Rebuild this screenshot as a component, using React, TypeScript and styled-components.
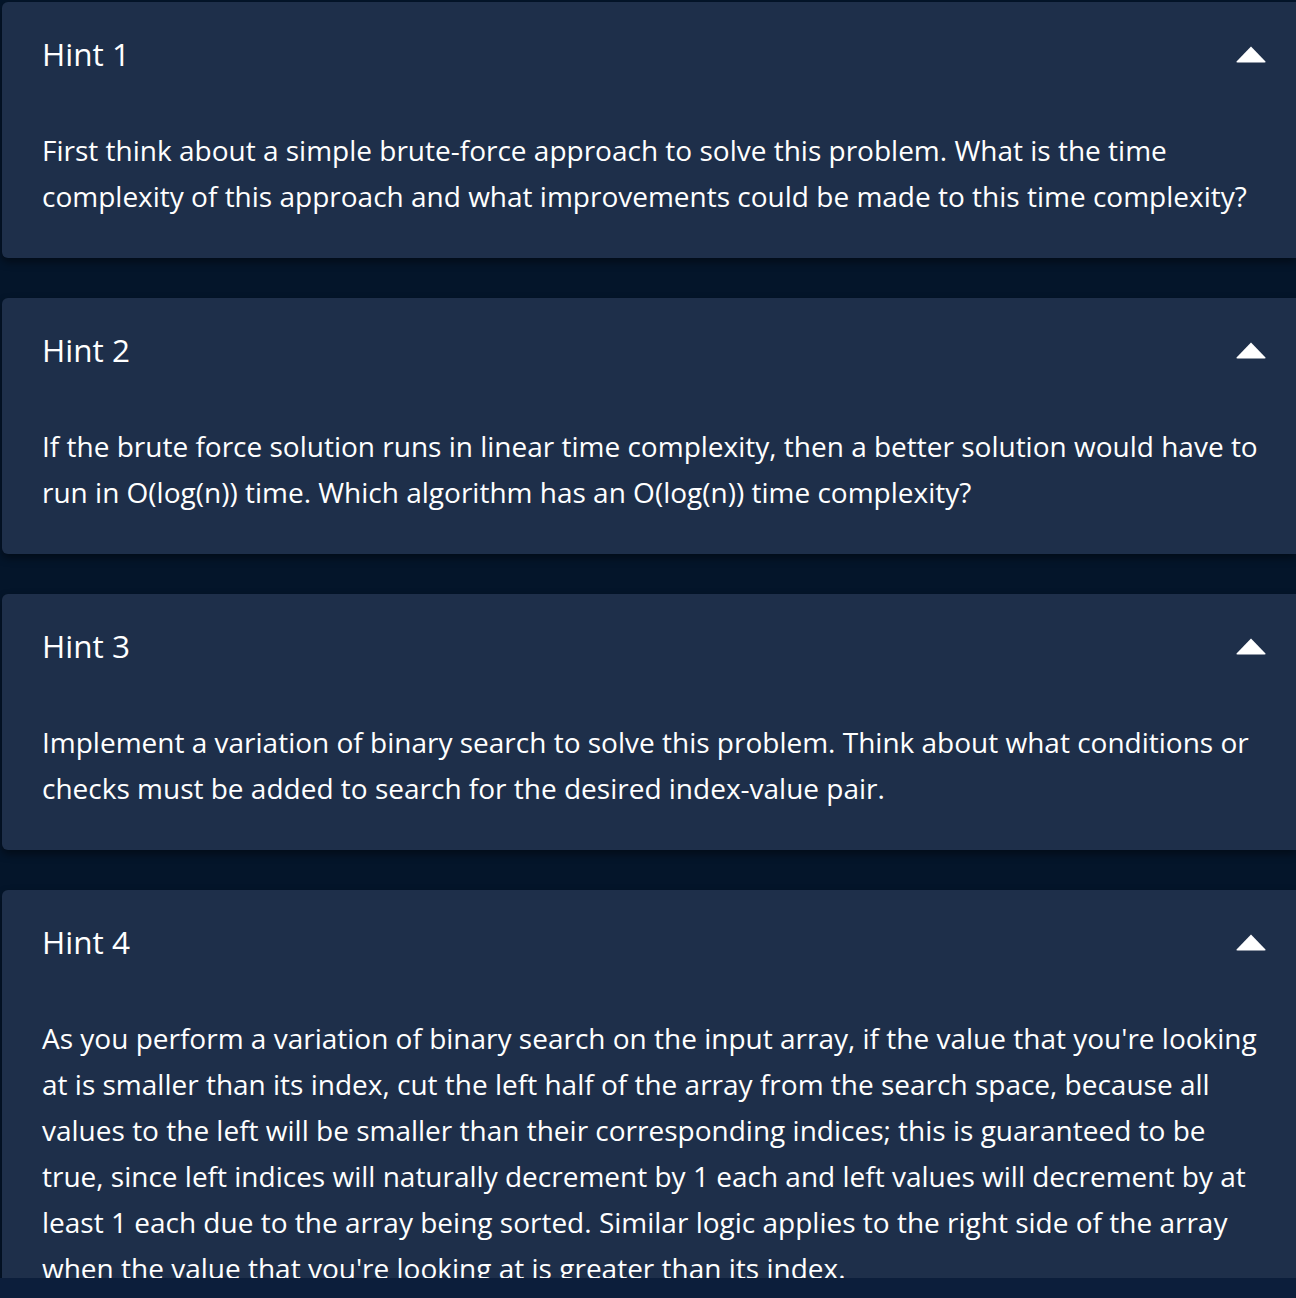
import React from 'react';
import styled, { createGlobalStyle } from 'styled-components';

const GlobalStyle = createGlobalStyle`
  html, body {
    margin: 0;
    padding: 0;
    background: #04152a;
    overflow: hidden;
  }
  body {
    font-family: 'Open Sans', 'Liberation Sans', sans-serif;
  }
`;

const Page = styled.div`
  width: 1296px;
  height: 1298px;
  display: flex;
  flex-direction: column;
  background: #04152a;
`;

const Scroller = styled.div`
  height: 1278px;
  flex-shrink: 0;
  overflow: hidden;
  padding: 2px 0 0 2px;
  box-sizing: border-box;
  display: flex;
  flex-direction: column;
  gap: 40px;
`;

const BottomBar = styled.div`
  flex: 1;
  background: #0c1e3b;
`;

const Card = styled.section`
  flex-shrink: 0;
  background: #1e2f4a;
  border-radius: 6px 0 0 6px;
  padding: 30px 30px 39px 40px;
  box-shadow: 0 4px 8px rgba(0, 0, 0, 0.45);
  color: #ffffff;
`;

const Header = styled.div`
  height: 44px;
  display: flex;
  align-items: center;
  justify-content: space-between;
`;

const Title = styled.h3`
  margin: 0;
  font-size: 31.5px;
  font-weight: 400;
  line-height: 44px;
`;

const Arrow = styled.svg`
  width: 30px;
  height: 18px;
  flex-shrink: 0;
`;

const Body = styled.p`
  margin: 51px 0 0;
  font-size: 28px;
  line-height: 46px;
  font-weight: 400;
`;

const hints = [
  'First think about a simple brute-force approach to solve this problem. What is the time complexity of this approach and what improvements could be made to this time complexity?',
  'If the brute force solution runs in linear time complexity, then a better solution would have to run in O(log(n)) time. Which algorithm has an O(log(n)) time complexity?',
  'Implement a variation of binary search to solve this problem. Think about what conditions or checks must be added to search for the desired index-value pair.',
  "As you perform a variation of binary search on the input array, if the value that you're looking at is smaller than its index, cut the left half of the array from the search space, because all values to the left will be smaller than their corresponding indices; this is guaranteed to be true, since left indices will naturally decrement by 1 each and left values will decrement by at least 1 each due to the array being sorted. Similar logic applies to the right side of the array when the value that you're looking at is greater than its index.",
];

const App: React.FC = () => (
  <Page>
    <GlobalStyle />
    <Scroller>
      {hints.map((text, i) => (
        <Card key={i}>
          <Header>
            <Title>Hint {i + 1}</Title>
            <Arrow viewBox="0 0 30 18">
              <path d="M15 1.5 L29.5 16.5 Q30 17.5 28.5 17.5 L1.5 17.5 Q0 17.5 0.5 16.5 Z" fill="#ffffff" />
            </Arrow>
          </Header>
          <Body>{text}</Body>
        </Card>
      ))}
    </Scroller>
    <BottomBar />
  </Page>
);

export default App;
